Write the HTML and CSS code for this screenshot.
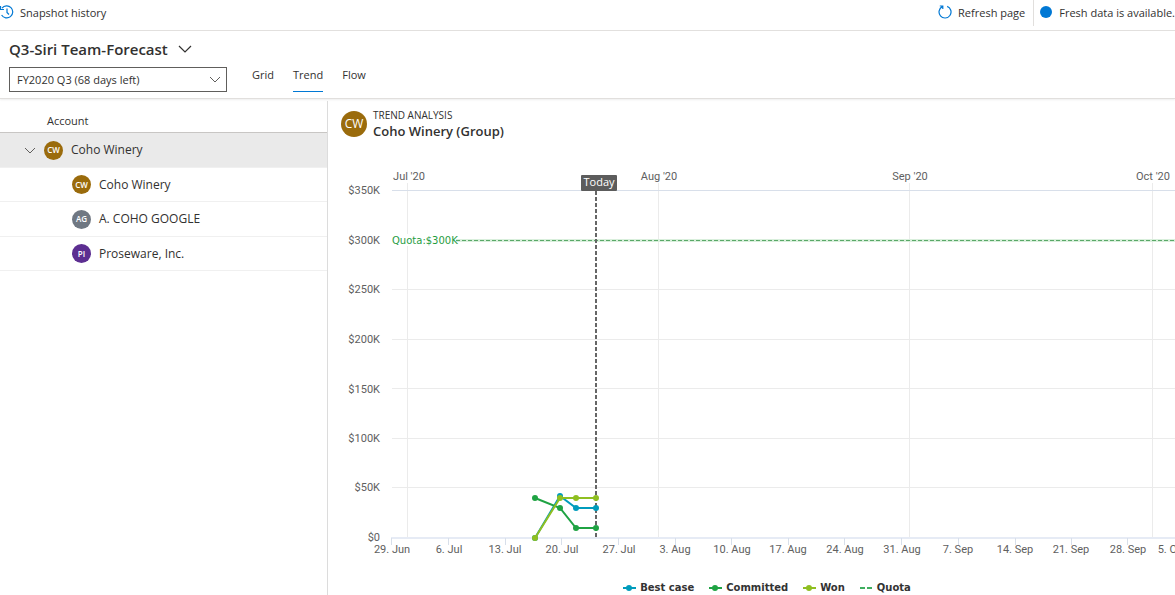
FILE: index.html
```html
<!DOCTYPE html>
<html lang="en">
<head>
<meta charset="utf-8">
<title>Forecast trend</title>
<link rel="stylesheet" href="styles.css">
</head>
<body>
<div class="app">
  <header class="commands">
    <button class="command" type="button">
      <svg class="icon history" width="14" height="14" viewBox="0 0 14 14"><path d="M2 3.2A6 6 0 1 1 1.6 10M.5 1v3.5H4M7 3.5V7.5L9 9.5" fill="none" stroke="#0078d4" stroke-width="1.2"/></svg>
      Snapshot history
    </button>
    <div class="status">
      <button class="command refresh" type="button">
        <svg class="icon" width="14" height="14" viewBox="0 0 14 14"><path d="M9.2 1.4A6 6 0 1 1 4.4 1.6M1.8 1h3v3" fill="none" stroke="#0078d4" stroke-width="1.2"/></svg>
        Refresh page
      </button>
      <span class="fresh"><span class="dot"></span>Fresh data is available.</span>
    </div>
  </header>

  <section class="toolbar">
    <button class="title" type="button">Q3-Siri Team-Forecast
      <svg width="14" height="8" viewBox="0 0 14 8"><path d="M1 1l6 6 6-6" fill="none" stroke="#323130" stroke-width="1.2"/></svg>
    </button>
    <div class="controls">
      <div class="picker">
        <select class="period" aria-label="Forecast period"><option>FY2020 Q3 (68 days left)</option></select>
        <svg class="caret" width="12" height="7" viewBox="0 0 12 7"><path d="M1 1l5 5 5-5" fill="none" stroke="#605e5c"/></svg>
      </div>
      <nav class="tabs">
        <a class="tab" href="#grid">Grid</a>
        <a class="tab active" href="#trend">Trend</a>
        <a class="tab" href="#flow">Flow</a>
      </nav>
    </div>
  </section>

  <main class="content">
    <aside class="accounts">
      <h2 class="accounts-head">Account</h2>
      <ul class="tree">
        <li class="row parent">
          <svg width="12" height="7" viewBox="0 0 12 7"><path d="M1 1l5 5 5-5" fill="none" stroke="#605e5c"/></svg>
          <span class="avatar gold">CW</span>Coho Winery
        </li>
        <li class="row"><span class="avatar gold">CW</span>Coho Winery</li>
        <li class="row"><span class="avatar gray">AG</span>A. COHO GOOGLE</li>
        <li class="row"><span class="avatar purple">PI</span>Proseware, Inc.</li>
      </ul>
    </aside>

    <section class="trend">
      <div class="trend-head">
        <span class="avatar large gold">CW</span>
        <div>
          <div class="eyebrow">TREND ANALYSIS</div>
          <h1 class="group">Coho Winery (Group)</h1>
        </div>
      </div>

      <svg class="chart" height="400" role="img" aria-label="Forecast trend by week">
        <g class="gridlines">
          <path d="M64 80.5H860M64 129.5H860M64 179.5H860M64 228.5H860M64 278.5H860M64 327.5H860"/>
          <path d="M79.5 23V378M330.5 23V378M581.5 23V378M824.5 23V378"/>
        </g>
        <path class="axis" d="M64 30.5H860"/>
        <path class="axis base" d="M63 378H860"/>
        <path class="axis" d="M63.5 378v7M120.5 378v7M177.5 378v7M233.5 378v7M290.5 378v7M347.5 378v7M403.5 378v7M460.5 378v7M516.5 378v7M573.5 378v7M630.5 378v7M687.5 378v7M743.5 378v7M799.5 378v7"/>

        <g class="label end">
          <text x="52" y="34">$350K</text><text x="52" y="84">$300K</text><text x="52" y="133">$250K</text><text x="52" y="183">$200K</text>
          <text x="52" y="233">$150K</text><text x="52" y="282">$100K</text><text x="52" y="331">$50K</text><text x="52" y="381">$0</text>
        </g>
        <g class="label middle">
          <text x="81" y="20">Jul '20</text><text x="331" y="20">Aug '20</text><text x="582" y="20">Sep '20</text><text x="825" y="20">Oct '20</text>
        </g>
        <g class="label middle">
          <text x="64" y="393">29. Jun</text><text x="121" y="393">6. Jul</text><text x="177" y="393">13. Jul</text><text x="234" y="393">20. Jul</text>
          <text x="291" y="393">27. Jul</text><text x="347" y="393">3. Aug</text><text x="404" y="393">10. Aug</text><text x="460" y="393">17. Aug</text>
          <text x="517" y="393">24. Aug</text><text x="574" y="393">31. Aug</text><text x="630" y="393">7. Sep</text><text x="687" y="393">14. Sep</text>
          <text x="743" y="393">21. Sep</text><text x="800" y="393">28. Sep</text><text x="844" y="393">5. Oct</text>
        </g>

        <rect x="64" y="74" width="64" height="12" fill="#fff"/>
        <path class="quota-halo" d="M128 80.5H860"/>
        <path class="quota" d="M128 80.5H860"/>
        <text class="quota-label" x="64" y="84">Quota:$300K</text>

        <path class="today" d="M268 31V378"/>
        <rect x="253" y="15" width="36" height="16" rx="1" fill="#5c5c5c"/>
        <text class="today-label" x="271" y="26">Today</text>

        <g class="series best"><path d="M207 378L232 336L248 348H268"/><circle cx="207" cy="378" r="3"/><circle cx="232" cy="336" r="3"/><circle cx="248" cy="348" r="3"/><circle cx="268" cy="348" r="3"/></g>
        <g class="series committed"><path d="M207 338L232 348L248 368H268"/><circle cx="207" cy="338" r="3"/><circle cx="232" cy="348" r="3"/><circle cx="248" cy="368" r="3"/><circle cx="268" cy="368" r="3"/></g>
        <g class="series won"><path d="M207 378L232 338H268"/><circle cx="207" cy="378" r="3"/><circle cx="232" cy="338" r="3"/><circle cx="248" cy="338" r="3"/><circle cx="268" cy="338" r="3"/></g>
      </svg>

      <ul class="legend">
        <li><svg class="series best" width="13" height="8"><path d="M0 4H13"/><circle cx="6" cy="4" r="3"/></svg>Best case</li>
        <li><svg class="series committed" width="13" height="8"><path d="M0 4H13"/><circle cx="6" cy="4" r="3"/></svg>Committed</li>
        <li><svg class="series won" width="13" height="8"><path d="M0 4H13"/><circle cx="6" cy="4" r="3"/></svg>Won</li>
        <li><svg width="13" height="8"><path class="quota-key" d="M0 4H13"/></svg>Quota</li>
      </ul>
    </section>
  </main>
</div>
</body>
</html>
```
FILE: styles.css
```css
* { box-sizing: border-box; }
body {
  margin: 0;
  background: #fff;
  color: #323130;
  font: 11px/16px "Open Sans", "Noto Sans", sans-serif;
  overflow: hidden;
}
button { padding: 0; border: 0; background: none; color: inherit; font: inherit; }
ul, h1, h2 { margin: 0; padding: 0; list-style: none; font-weight: 400; }
svg { flex: none; }

.app { display: flex; flex-direction: column; min-height: 100vh; }

.commands {
  display: flex;
  justify-content: space-between;
  height: 31px;
  border-bottom: 1px solid #e1dfdd;
  white-space: nowrap;
}
.command { display: flex; align-items: center; gap: 6px; height: 26px; }
.icon { margin-bottom: 2px; }
.status { display: flex; }
.refresh { padding-right: 8px; border-right: 1px solid #e1dfdd; }
.fresh { display: flex; align-items: center; gap: 7px; height: 26px; padding-left: 6px; }
.dot { width: 12px; height: 12px; margin-bottom: 3px; border-radius: 50%; background: #0078d4; }

.toolbar {
  display: flex;
  flex-direction: column;
  align-items: flex-start;
  height: 68px;
  padding: 8px 9px 0;
  border-bottom: 1px solid #e1dfdd;
  box-shadow: 0 1px 2px #eeeeee;
}
.title { display: flex; align-items: center; gap: 10px; font-size: 15px; line-height: 20px; font-weight: 600; }
.controls { display: flex; gap: 25px; padding-top: 8px; }
.picker { position: relative; width: 218px; }
.period {
  appearance: none;
  width: 100%;
  height: 25px;
  padding: 0 7px;
  border: 1px solid #605e5c;
  border-radius: 0;
  background: #fff;
  color: inherit;
  font: inherit;
}
.caret { position: absolute; top: 9px; right: 6px; pointer-events: none; }
.tabs { display: flex; gap: 19px; }
.tab { height: 25px; color: inherit; text-decoration: none; }
.active { border-bottom: 1px solid #0078d4; }

.content { display: flex; flex: 1; padding-top: 2px; }
.accounts { flex: none; width: 328px; border-right: 1px solid #dcdcdc; }
.accounts-head { height: 32px; padding: 12px 47px 0; border-bottom: 1px solid #c8c6c4; font-size: 11px; line-height: 16px; }
.row {
  display: flex;
  align-items: center;
  gap: 8px;
  height: 35px;
  padding-left: 72px;
  border-bottom: 1px solid #f0f0f0;
  font-size: 12px;
}
.row:nth-child(even) { height: 34px; }
.parent { padding-left: 24px; background: #eaeaea; }
.avatar {
  display: flex;
  align-items: center;
  justify-content: center;
  flex: none;
  width: 19px;
  height: 19px;
  border-radius: 50%;
  color: #fff;
  font-size: 8px;
  font-weight: 600;
}
.gold { background: #9a6b0c; }
.gray { background: #6f7782; }
.purple { background: #5c2e91; }
.large { width: 26px; height: 26px; font-size: 12px; font-weight: 400; }

.trend { flex: 1; min-width: 0; overflow: hidden; }
.trend-head { display: flex; align-items: center; gap: 6px; height: 59px; padding: 0 13px 14px; }
.eyebrow { font-size: 10px; line-height: 14px; }
.group { font-size: 13px; line-height: 18px; font-weight: 600; }

.chart { display: block; width: 100%; }
.gridlines { fill: none; stroke: #ebebeb; }
.axis { fill: none; stroke: #d8dfea; }
.base { stroke: #e6ebf5; stroke-width: 2; }
.label { fill: #606060; font: 11px Roboto, sans-serif; }
.end { text-anchor: end; }
.middle { text-anchor: middle; }
.quota { stroke: #5aa868; stroke-dasharray: 4 2; }
.quota-halo { stroke: #d9efdc; stroke-width: 3; }
.quota-label { fill: #1f9d3f; font: 10px "DejaVu Sans", sans-serif; }
.quota-key { stroke: #3fae5f; stroke-width: 2; stroke-dasharray: 5 2; }
.today { stroke: #666666; stroke-width: 2; stroke-dasharray: 4 2; }
.today-label { fill: #fff; font-size: 11px; text-anchor: middle; }
.series path { fill: none; stroke-width: 2; }
.best { fill: #009cbc; stroke: #009cbc; }
.committed { fill: #1fa343; stroke: #1fa343; }
.won { fill: #8fbf21; stroke: #8fbf21; }
.legend { color: #333333; }
.series circle, .series circle { stroke: none; }

.legend {
  display: flex;
  justify-content: center;
  gap: 15px;
  padding: 20px 0 0 31px;
  font: 700 10px/16px "DejaVu Sans", sans-serif;
}
.legend li { display: flex; align-items: center; gap: 4px; }
```
